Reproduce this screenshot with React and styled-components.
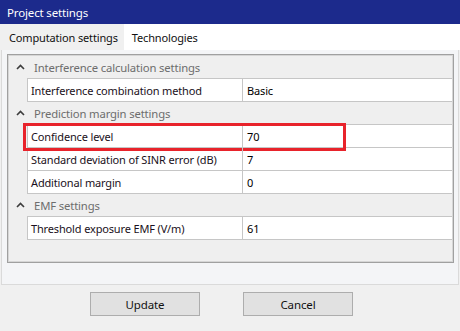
import React from "react";
import styled, { createGlobalStyle } from "styled-components";

const Global = createGlobalStyle`
  html, body { margin: 0; padding: 0; }
  body {
    width: 460px; height: 331px; overflow: hidden;
    background: #f0f0f0;
    font-family: "Noto Sans", "Open Sans", sans-serif;
    font-size: 11px;
    letter-spacing: -0.15px;
  }
`;

const Window = styled.div`
  width: 460px; height: 331px;
  display: flex; flex-direction: column;
  background: #f0f0f0;
`;

const TitleBar = styled.div`
  height: 24px; background: #1c2a8c; color: #fff;
  display: flex; align-items: center; padding-left: 7px;
  font-size: 11.5px;
`;

const TabStrip = styled.div`
  height: 26px; background: #fff; display: flex;
`;

const Tab = styled.div`
  display: flex; align-items: center;
  flex-shrink: 0;
  white-space: nowrap;
  padding-left: ${p => (p.$active ? "9px" : "8px")};
  padding-right: ${p => (p.$active ? "6px" : "8px")};
  background: ${p => (p.$active ? "#f0f0f0" : "#fff")};
  color: #111;
`;

const Panel = styled.div`
  margin: 0 1px 0 1px;
  height: 235px;
  box-sizing: border-box;
  border: 1px solid #dadada;
  border-top: none;
  background: #f4f5f7;
  padding: 4px 4px 21px 5px;
  display: flex;
`;

const Grid = styled.div`
  flex: 1;
  border: 1px solid #a0a0a0;
  box-shadow: inset 0 0 0 1px #d6d6d6;
  background: #efefef;
  display: flex; flex-direction: column;
`;

const CatRow = styled.div`
  height: 22px; display: flex; align-items: center;
  padding-left: 8px; gap: 9px; color: #6d6d6d;
  font-size: 11.3px;
  padding-top: ${p => (p.$first ? "1px" : "0")};
`;

const PropList = styled.div`
  margin-left: 19px;
  margin-right: 1px;
  border-top: 1px solid #c6c6c6;
  border-left: 1px solid #c6c6c6;
  background: #fff;
`;

const PropRow = styled.div`
  position: relative;
  height: 22px;
  display: grid; grid-template-columns: 214px 1fr;
  border-bottom: 1px solid #c6c6c6;
`;

const Cell = styled.div`
  display: flex; align-items: center;
  padding-left: ${p => (p.$value ? "4px" : "3px")};
  color: ${p => (p.$value ? "#000" : "#1a1020")};
  border-left: ${p => (p.$value ? "1px solid #c6c6c6" : "none")};
`;

const Highlight = styled.div`
  position: absolute;
  left: -5px; top: -2px;
  width: 317px; height: 22px;
  border: 3px solid #e8232b;
  pointer-events: none;
`;

const Footer = styled.div`
  flex: 1; display: flex; justify-content: center; align-items: flex-start;
  padding-top: 7px; gap: 43px; padding-right: 17px;
`;

const Button = styled.button`
  width: 110px; height: 24px;
  box-sizing: border-box;
  background: #e1e1e1;
  border: 1px solid #adadad;
  font-family: inherit; font-size: 11.5px; color: #111;
  letter-spacing: -0.1px;
  padding: 0;
`;

const Chevron = () => (
  <svg width="9" height="6" viewBox="0 0 9 6">
    <path d="M1 5 L4.5 1.5 L8 5" fill="none" stroke="#3c3c3c" strokeWidth="1.6" />
  </svg>
);

const groups = [
  {
    title: "Interference calculation settings",
    rows: [["Interference combination method", "Basic"]],
  },
  {
    title: "Prediction margin settings",
    rows: [
      ["Confidence level", "70", true],
      ["Standard deviation of SINR error (dB)", "7"],
      ["Additional margin", "0"],
    ],
  },
  {
    title: "EMF settings",
    rows: [["Threshold exposure EMF (V/m)", "61"]],
  },
];

export default function App() {
  return (
    <Window>
      <Global />
      <TitleBar>Project settings</TitleBar>
      <TabStrip>
        <Tab $active>Computation settings</Tab>
        <Tab>Technologies</Tab>
      </TabStrip>
      <Panel>
        <Grid>
          {groups.map((g, i) => (
            <React.Fragment key={g.title}>
              <CatRow $first={i === 0}>
                <Chevron />
                <span>{g.title}</span>
              </CatRow>
              <PropList>
                {g.rows.map(([name, value, hl]) => (
                  <PropRow key={name}>
                    <Cell>{name}</Cell>
                    <Cell $value>{value}</Cell>
                    {hl && <Highlight />}
                  </PropRow>
                ))}
              </PropList>
            </React.Fragment>
          ))}
        </Grid>
      </Panel>
      <Footer>
        <Button>Update</Button>
        <Button>Cancel</Button>
      </Footer>
    </Window>
  );
}
